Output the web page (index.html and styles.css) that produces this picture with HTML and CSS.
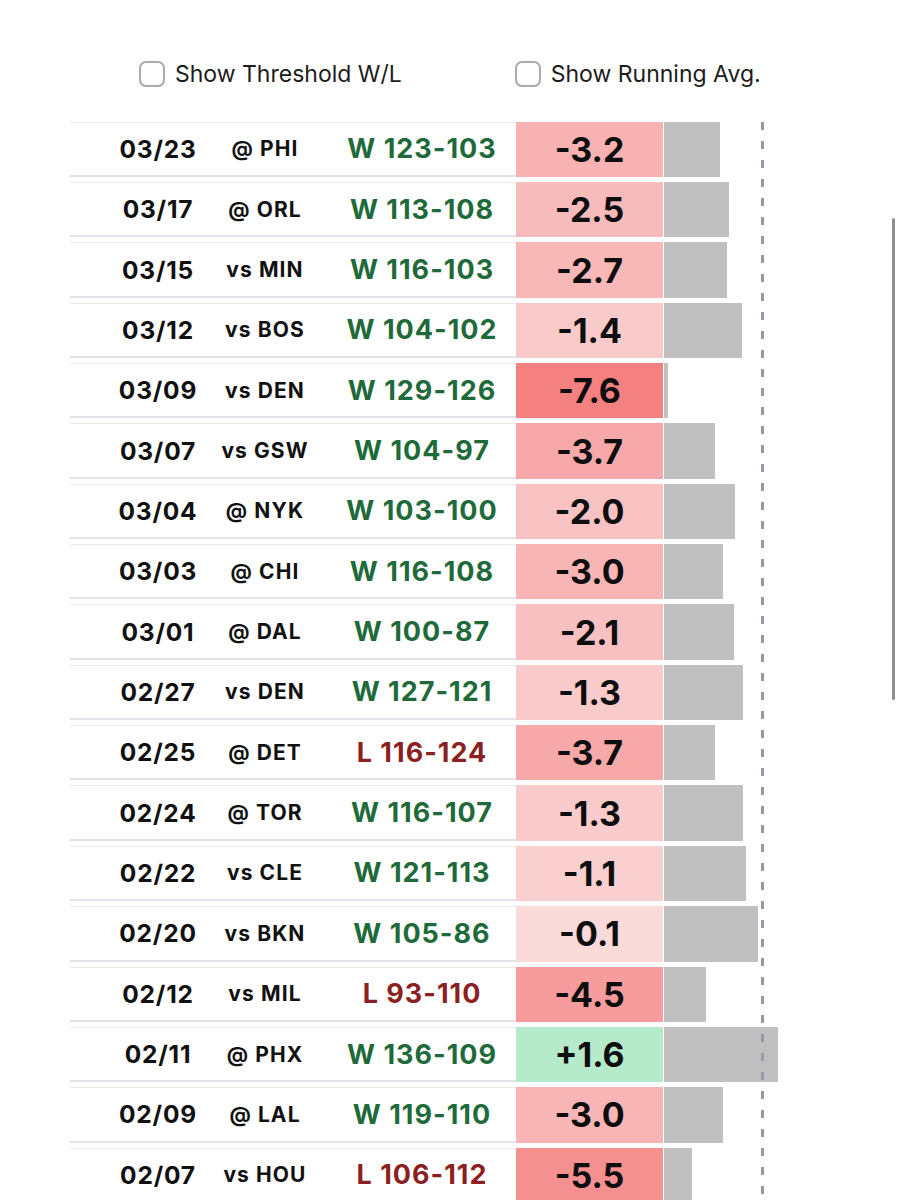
FILE: index.html
```html
<!DOCTYPE html>
<html lang="en">
<head>
<meta charset="utf-8">
<title>Game log</title>
<link rel="stylesheet" href="styles.css">
</head>
<body>
<div class="page">
  <div class="toggles">
    <label class="toggle"><span class="box"></span><span class="toggle-text">Show Threshold W/L</span></label>
    <label class="toggle"><span class="box"></span><span class="toggle-text">Show Running Avg.</span></label>
  </div>
  <div class="table">
    <div class="zero-line"></div>
    <div class="row"><div class="date">03/23</div><div class="opp">@ PHI</div><div class="res win">W 123-103</div><div class="val" style="background:#f8b2b2">-3.2</div><div class="barcell"><div class="bar" style="width:56px"></div></div></div>
    <div class="row"><div class="date">03/17</div><div class="opp">@ ORL</div><div class="res win">W 113-108</div><div class="val" style="background:#f8bbbb">-2.5</div><div class="barcell"><div class="bar" style="width:65px"></div></div></div>
    <div class="row"><div class="date">03/15</div><div class="opp">vs MIN</div><div class="res win">W 116-103</div><div class="val" style="background:#f8b8b8">-2.7</div><div class="barcell"><div class="bar" style="width:63px"></div></div></div>
    <div class="row"><div class="date">03/12</div><div class="opp">vs BOS</div><div class="res win">W 104-102</div><div class="val" style="background:#f9caca">-1.4</div><div class="barcell"><div class="bar" style="width:78px"></div></div></div>
    <div class="row"><div class="date">03/09</div><div class="opp">vs DEN</div><div class="res win">W 129-126</div><div class="val" style="background:#f48080">-7.6</div><div class="barcell"><div class="bar" style="width:4px"></div></div></div>
    <div class="row"><div class="date">03/07</div><div class="opp">vs GSW</div><div class="res win">W 104-97</div><div class="val" style="background:#f7a8a8">-3.7</div><div class="barcell"><div class="bar" style="width:51px"></div></div></div>
    <div class="row"><div class="date">03/04</div><div class="opp">@ NYK</div><div class="res win">W 103-100</div><div class="val" style="background:#f8c2c2">-2.0</div><div class="barcell"><div class="bar" style="width:71px"></div></div></div>
    <div class="row"><div class="date">03/03</div><div class="opp">@ CHI</div><div class="res win">W 116-108</div><div class="val" style="background:#f8b5b5">-3.0</div><div class="barcell"><div class="bar" style="width:59px"></div></div></div>
    <div class="row"><div class="date">03/01</div><div class="opp">@ DAL</div><div class="res win">W 100-87</div><div class="val" style="background:#f8c0c0">-2.1</div><div class="barcell"><div class="bar" style="width:70px"></div></div></div>
    <div class="row"><div class="date">02/27</div><div class="opp">vs DEN</div><div class="res win">W 127-121</div><div class="val" style="background:#f9cbcb">-1.3</div><div class="barcell"><div class="bar" style="width:79px"></div></div></div>
    <div class="row"><div class="date">02/25</div><div class="opp">@ DET</div><div class="res loss">L 116-124</div><div class="val" style="background:#f7a8a8">-3.7</div><div class="barcell"><div class="bar" style="width:51px"></div></div></div>
    <div class="row"><div class="date">02/24</div><div class="opp">@ TOR</div><div class="res win">W 116-107</div><div class="val" style="background:#f9cbcb">-1.3</div><div class="barcell"><div class="bar" style="width:79px"></div></div></div>
    <div class="row"><div class="date">02/22</div><div class="opp">vs CLE</div><div class="res win">W 121-113</div><div class="val" style="background:#facfcf">-1.1</div><div class="barcell"><div class="bar" style="width:82px"></div></div></div>
    <div class="row"><div class="date">02/20</div><div class="opp">vs BKN</div><div class="res win">W 105-86</div><div class="val" style="background:#fbdada">-0.1</div><div class="barcell"><div class="bar" style="width:94px"></div></div></div>
    <div class="row"><div class="date">02/12</div><div class="opp">vs MIL</div><div class="res loss">L 93-110</div><div class="val" style="background:#f69c9c">-4.5</div><div class="barcell"><div class="bar" style="width:42px"></div></div></div>
    <div class="row"><div class="date">02/11</div><div class="opp">@ PHX</div><div class="res win">W 136-109</div><div class="val" style="background:#b5ebcb">+1.6</div><div class="barcell"><div class="bar" style="width:114px"></div></div></div>
    <div class="row"><div class="date">02/09</div><div class="opp">@ LAL</div><div class="res win">W 119-110</div><div class="val" style="background:#f8b5b5">-3.0</div><div class="barcell"><div class="bar" style="width:59px"></div></div></div>
    <div class="row"><div class="date">02/07</div><div class="opp">vs HOU</div><div class="res loss">L 106-112</div><div class="val" style="background:#f59090">-5.5</div><div class="barcell"><div class="bar" style="width:28px"></div></div></div>
  </div>
</div>
<div class="scroll-indicator"></div>
</body>
</html>
```

FILE: styles.css
```css
html, body {
  margin: 0;
  padding: 0;
  background: #ffffff;
}

body {
  font-family: Inter, "Noto Sans", "Liberation Sans", sans-serif;
  color: #151515;
  overflow: hidden;
  height: 1200px;
}

.page {
  padding-left: 70px;
}

.toggles {
  display: flex;
  align-items: center;
  gap: 113px;
  padding-left: 69px;
  padding-top: 61px;
  height: 26px;
}

.toggle {
  display: flex;
  align-items: center;
  gap: 10px;
}

.box {
  width: 22px;
  height: 22px;
  border: 2px solid #a9a9b1;
  border-radius: 7px;
  background: #fff;
}

.toggle-text {
  font-size: 23px;
  color: #1c1c1c;
  font-weight: 400;
}

.table {
  position: relative;
  margin-top: 34.7px;
  display: flex;
  flex-direction: column;
  gap: 5px;
}

.zero-line {
  position: absolute;
  left: 691px;
  top: 0;
  width: 3px;
  height: 1100px;
  background: repeating-linear-gradient(to bottom, #9898a6 0 8px, transparent 8px 19px);
  z-index: 2;
}

.row {
  display: grid;
  grid-template-columns: 150px 90px 206px 147px 140px;
  height: 55.35px;
}

.date, .opp, .res {
  box-sizing: border-box;
  border-top: 1px solid #eaeaef;
  border-bottom: 2px solid #e2e2e8;
  display: flex;
  align-items: center;
  justify-content: center;
  font-weight: 700;
}

.date {
  padding-left: 26px;
  font-size: 24.5px;
  letter-spacing: 0.8px;
  color: #111;
}

.opp {
  font-size: 21px;
  letter-spacing: 1.1px;
  color: #111;
}

.res {
  padding-left: 18px;
  font-size: 27px;
  letter-spacing: 1px;
}

.win { color: #1f6a3b; }
.loss { color: #8c1f22; }

.val {
  display: flex;
  align-items: center;
  justify-content: center;
  font-size: 34px;
  font-weight: 700;
  color: #0e0e0e;
}

.barcell {
  padding-left: 1px;
}

.bar {
  height: 100%;
  background: #c0c0c0;
}

.scroll-indicator {
  position: absolute;
  left: 892px;
  top: 218px;
  width: 3px;
  height: 482px;
  border-radius: 2px;
  background: #8f8f8f;
}
```
